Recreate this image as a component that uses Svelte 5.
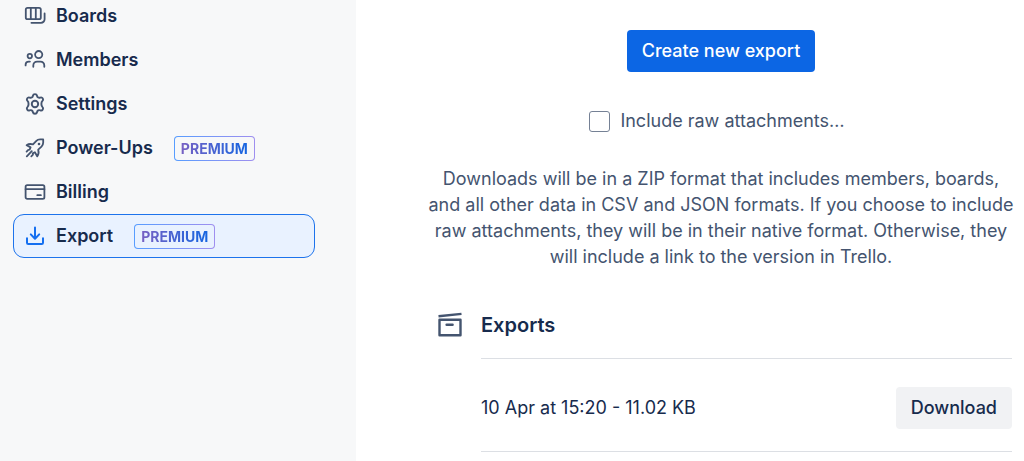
<script>
    let includeAttachments = $state(false);

    const links = [
        { name: 'Boards', icon: 'boards' },
        { name: 'Members', icon: 'members' },
        { name: 'Settings', icon: 'settings' },
        { name: 'Power-Ups', icon: 'rocket', premium: true },
        { name: 'Billing', icon: 'card' },
        { name: 'Export', icon: 'export', premium: true, active: true }
    ];

    const exportsList = [
        { date: '10 Apr at 15:20', size: '11.02 KB' }
    ];
</script>

{#snippet icon(name)}
    <svg class="icon" viewBox="0 0 22 22" aria-hidden="true">
        {#if name === 'boards'}
            <rect x="1.8" y="2.8" width="15" height="11.4" rx="1.8" />
            <path d="M6.8 2.8v11.4M11.8 2.8v11.4M20.6 8.5v5.7a3.6 3.6 0 0 1-3.6 3.6H7.4" />
        {:else if name === 'members'}
            <circle cx="14.7" cy="5.6" r="3.6" />
            <circle cx="5.8" cy="7.1" r="2.2" />
            <path d="M9.3 17.8v-1.4a3.8 3.8 0 0 1 3.8-3.8h3.4a3.8 3.8 0 0 1 3.8 3.8v1.4M1.6 16.4v-.6a3.2 3.2 0 0 1 3.2-3.2h1.1" />
        {:else if name === 'settings'}
            <g transform="translate(-.8 -.8) scale(1.07)">
                <circle cx="11" cy="11" r="3" />
                <path d="M9.1 3.3C9.3 2.2 9.9 1.8 11 1.8s1.7.4 1.9 1.5c.3 1.6 1.6 2.3 3.1 1.7 1-.4 1.7-.1 2.3.9s.4 1.7-.4 2.4c-1.2 1-1.2 4.4 0 5.4.8.7 1 1.4.4 2.4s-1.3 1.3-2.3.9c-1.5-.6-2.8.1-3.1 1.7-.2 1.1-.8 1.5-1.9 1.5s-1.7-.4-1.9-1.5c-.3-1.6-1.6-2.3-3.1-1.7-1 .4-1.7.1-2.3-.9s-.4-1.7.4-2.4c1.2-1 1.2-4.4 0-5.4-.8-.7-1-1.4-.4-2.4s1.3-1.3 2.3-.9c1.5.6 2.8-.1 3.1-1.7z" />
            </g>
        {:else if name === 'rocket'}
            <path d="M5.6 12.6l1-2.2-4-2.2c1.8-1.3 4.1-1.5 6.4-.8l3.1-3.3c1.1-1.2 2.4-1.7 4-1.7h3.1v3.2c0 1.6-.6 3-1.7 4l-3.3 3.1c.7 2.3.5 4.8-1 6.6l-2.3-4-2.2 1.1M7.8 14.2l-5 5.2M4.3 12.9l-1.7 1.7M9 17.7l-1.7 1.7" />
            <circle class="dot" cx="15" cy="7" r="1.3" />
        {:else if name === 'card'}
            <rect x="1.6" y="4.1" width="18.8" height="13.8" rx="1.6" />
            <path d="M1.6 8.2h18.8M13.3 14.2h3.6" />
        {:else if name === 'export'}
            <path d="M11 2.4v11M6.8 9.4l4.2 4.3 4.2-4.3M3 13.2v4.6c0 .8.5 1.3 1.3 1.3h13.4c.8 0 1.3-.5 1.3-1.3v-4.6" />
        {/if}
    </svg>
{/snippet}

<div class="page">
    <nav class="sidebar">
        <ul>
            {#each links as link}
                <li>
                    <a href="#{link.icon}" class:active={link.active}>
                        {@render icon(link.icon)}
                        <span>{link.name}</span>
                        {#if link.premium}
                            <span class="badge"><span>PREMIUM</span></span>
                        {/if}
                    </a>
                </li>
            {/each}
        </ul>
    </nav>

    <main>
        <section class="create">
            <button class="primary">Create new export</button>
            <label>
                <input type="checkbox" bind:checked={includeAttachments} />
                Include raw attachments…
            </label>
            <p>
                Downloads will be in a ZIP format that includes members, boards, and all other data in CSV and JSON formats. If you choose to include raw attachments, they will be in their native format. Otherwise, they will include a link to the version in Trello.
            </p>
        </section>

        <section class="exports">
            <header>
                <svg class="archive" viewBox="0 0 26 26" aria-hidden="true">
                    <path d="M1.5 4.2 24.5 1.9" />
                    <path d="M2.5 7.8h21v15.4h-21z" />
                    <path d="M9.6 12.8h6" stroke-linecap="round" />
                </svg>
                <h2>Exports</h2>
            </header>
            <ul>
                {#each exportsList as item}
                    <li>
                        <span>{item.date} - {item.size}</span>
                        <button>Download</button>
                    </li>
                {/each}
            </ul>
        </section>
    </main>
</div>

<style>
    :global(body) {
        background: #fff;
    }

    .page {
        display: flex;
        min-height: 100vh;
        overflow: hidden;
        color: #172b4d;
        font-family: Inter, 'Liberation Sans', sans-serif;
        font-size: 18px;
        line-height: 26px;
    }

    ul {
        margin: 0;
        padding: 0;
        list-style: none;
    }

    .sidebar {
        flex: none;
        box-sizing: border-box;
        width: 356px;
        padding: 0 41px 0 13px;
        background: #f7f8f9;
    }

    /* the list is scrolled a little past the top */
    .sidebar ul {
        margin-top: -6px;
    }

    .sidebar a {
        display: flex;
        align-items: center;
        box-sizing: border-box;
        height: 44px;
        padding: 0 10px;
        border: 1px solid transparent;
        border-radius: 11px;
        color: #172b4d;
        font-weight: 600;
        text-decoration: none;
    }

    .sidebar a.active {
        border-color: #1d73ec;
        background: #e9f2ff;
    }

    .icon {
        flex: none;
        width: 22px;
        height: 22px;
        margin-right: 10px;
        fill: none;
        stroke: #44546f;
        stroke-width: 1.8;
        stroke-linecap: round;
        stroke-linejoin: round;
    }

    .icon .dot {
        fill: #44546f;
        stroke: none;
    }

    .active .icon {
        stroke: #146ff0;
        stroke-width: 2;
    }

    .badge {
        margin-left: 21px;
        padding: 1px;
        border-radius: 4px;
        background: linear-gradient(90deg, #579dff, #9f8fef);
        font-size: 14px;
        font-weight: 700;
        line-height: 23px;
    }

    .badge span {
        display: block;
        padding: 0 6px;
        border-radius: 3px;
        background: linear-gradient(90deg, #8060c0, #0c66e4) text, #f7f8f9;
        color: transparent;
    }

    .active .badge span {
        background: linear-gradient(90deg, #8060c0, #0c66e4) text, #e9f2ff;
    }

    main {
        flex: 1;
        min-width: 0;
        padding: 30px 12px 0 74px;
    }

    .create {
        display: flex;
        flex-direction: column;
        align-items: center;
        margin: 0 -3px;
        color: #44546f;
    }

    button {
        height: 42px;
        padding: 0 15px;
        border: 0;
        border-radius: 4px;
        background: #f1f2f4;
        color: #172b4d;
        font: inherit;
        font-weight: 500;
        cursor: pointer;
    }

    button.primary {
        background: #0c66e4;
        color: #fff;
    }

    label {
        display: flex;
        align-items: center;
        gap: 10px;
        margin: 36px 0 32px;
        padding-right: 8px;
    }

    input {
        appearance: none;
        box-sizing: border-box;
        width: 21px;
        height: 21px;
        margin: 0;
        border: 1px solid #758195;
        border-radius: 3px;
        background: #fff;
    }

    input:checked {
        background: #0c66e4;
    }

    p {
        margin: 0;
        text-align: center;
    }

    .exports {
        margin-top: 42px;
    }

    header {
        display: flex;
        align-items: center;
        gap: 18px;
        padding-left: 7px;
    }

    h2 {
        margin: 0;
        font-size: 20px;
        font-weight: 600;
        line-height: 26px;
    }

    .archive {
        width: 26px;
        height: 26px;
        fill: none;
        stroke: #44546f;
        stroke-width: 2.4;
        stroke-linejoin: round;
    }

    .exports ul {
        margin: 20px 0 0 51px;
        border-top: 1px solid #dcdfe4;
    }

    .exports li {
        display: flex;
        align-items: center;
        justify-content: space-between;
        padding: 28px 0 22px;
        border-bottom: 1px solid #dcdfe4;
    }
</style>
